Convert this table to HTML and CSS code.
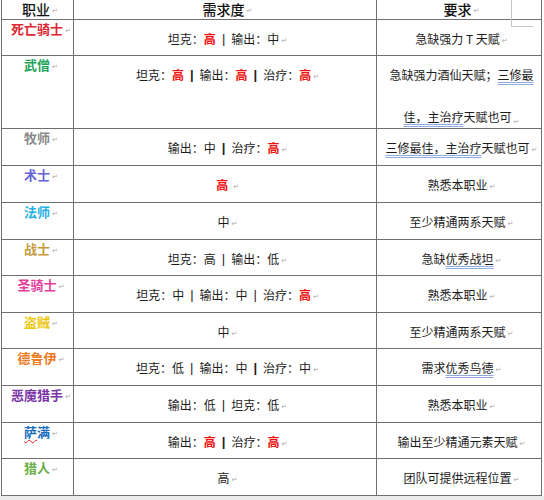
FILE: index.html
```html
<!DOCTYPE html>
<html lang="zh-CN">
<head>
<meta charset="utf-8">
<title>职业需求</title>
<link rel="stylesheet" href="styles.css">
</head>
<body>
<div class="page">
  <div class="sheet">
    <div class="c head">职业<span class="pm">↵</span></div>
    <div class="c head">需求度<span class="pm">↵</span></div>
    <div class="c head">要求<span class="pm">↵</span></div>

    <div class="c name dk">死亡骑士<span class="pm">↵</span></div>
    <div class="c">坦克：<b class="hi">高</b><span class="bar">|</span>输出：中<span class="pm">↵</span></div>
    <div class="c">急缺强力 T 天赋<span class="pm">↵</span></div>

    <div class="c name monk">武僧<span class="pm">↵</span></div>
    <div class="c tall">坦克：<b class="hi">高</b><span class="bar bold">|</span>输出：<b class="hi">高</b><span class="bar bold">|</span>治疗：<b class="hi">高</b><span class="pm">↵</span></div>
    <div class="c tall"><span class="two">急缺强力酒仙天赋；<u class="gram">三修最</u><br><u class="gram">佳，主治疗</u>天赋也可<span class="pm">↵</span></span></div>

    <div class="c name priest">牧师<span class="pm">↵</span></div>
    <div class="c">输出：中<span class="bar bold">|</span>治疗：<b class="hi">高</b><span class="pm">↵</span></div>
    <div class="c"><u class="gram">三修最佳，主治疗</u>天赋也可<span class="pm">↵</span></div>

    <div class="c name lock">术士<span class="pm">↵</span></div>
    <div class="c"><b class="hi">高</b>&nbsp;<span class="pm">↵</span></div>
    <div class="c">熟悉本职业<span class="pm">↵</span></div>

    <div class="c name mage">法师<span class="pm">↵</span></div>
    <div class="c">中<span class="pm">↵</span></div>
    <div class="c">至少精通两系天赋<span class="pm">↵</span></div>

    <div class="c name warrior">战士<span class="pm">↵</span></div>
    <div class="c">坦克：高<span class="bar">|</span>输出：低<span class="pm">↵</span></div>
    <div class="c">急缺<u class="gram">优秀战坦</u><span class="pm">↵</span></div>

    <div class="c name paladin">圣骑士<span class="pm">↵</span></div>
    <div class="c">坦克：中<span class="bar">|</span>输出：中<span class="bar">|</span>治疗：<b class="hi">高</b><span class="pm">↵</span></div>
    <div class="c">熟悉本职业<span class="pm">↵</span></div>

    <div class="c name rogue">盗贼<span class="pm">↵</span></div>
    <div class="c">中<span class="pm">↵</span></div>
    <div class="c">至少精通两系天赋<span class="pm">↵</span></div>

    <div class="c name druid">德鲁伊<span class="pm">↵</span></div>
    <div class="c">坦克：低<span class="bar">|</span>输出：中<span class="bar bold">|</span>治疗：中<span class="pm">↵</span></div>
    <div class="c">需求<u class="gram">优秀鸟德</u><span class="pm">↵</span></div>

    <div class="c name dh">恶魔猎手<span class="pm">↵</span></div>
    <div class="c">输出：低<span class="bar">|</span>坦克：低<span class="pm">↵</span></div>
    <div class="c">熟悉本职业<span class="pm">↵</span></div>

    <div class="c name shaman"><u class="spell">萨</u>满<span class="pm">↵</span></div>
    <div class="c">输出：<b class="hi">高</b><span class="bar bold">|</span>治疗：<b class="hi">高</b><span class="pm">↵</span></div>
    <div class="c">输出至少精通元素天赋<span class="pm">↵</span></div>

    <div class="c name hunter">猎人<span class="pm">↵</span></div>
    <div class="c">高<span class="pm">↵</span></div>
    <div class="c">团队可提供远程位置<span class="pm">↵</span></div>
  </div>
  <span class="cropmark"></span>
</div>
</body>
</html>
```

FILE: styles.css
```css
html, body {
  margin: 0;
  padding: 0;
}
body {
  background: #ececec;
  font-family: "Noto Sans CJK SC", "Noto Sans", sans-serif;
}
.page {
  position: relative;
  width: 544px;
  height: 496px;
  background: #ffffff;
}
.sheet {
  display: grid;
  grid-template-columns: 71px 302px 164px;
  grid-template-rows: 19px 35px 72px 36px 36px 36px 35px 36px 35px 36px 36px 35px 36px;
  gap: 1px;
  width: max-content;
  margin-left: 1px;
  padding: 0 1px 1px 1px;
  background: #6f6f6f;
}
.c {
  background: #ffffff;
  display: flex;
  justify-content: center;
  align-items: center;
  padding: 2px 0 0 5px;
  font-size: 12px;
  line-height: 16px;
  color: #1c1c1c;
  white-space: nowrap;
  overflow: visible;
}
.head {
  padding: 0 0 0 5px;
  font-size: 14px;
  line-height: 19px;
  font-weight: 500;
  color: #111;
}
.name {
  align-items: flex-start;
  padding: 1px 0 0 7px;
  font-size: 13px;
  font-weight: 700;
  line-height: 16px;
}
.tall {
  align-items: flex-start;
  padding-top: 0;
  line-height: 38px;
}
.two {
  display: block;
  text-align: center;
  line-height: 42px;
  margin-top: -2px;
}
.pm {
  font-family: "DejaVu Sans", sans-serif;
  font-size: 7px;
  font-weight: 400;
  color: #a8a8a8;
  margin-left: 2px;
  position: relative;
  top: 2px;
}
.hi {
  color: #f01010;
  font-weight: 700;
}
.bar {
  margin: 0 6px;
  font-family: "Liberation Sans", sans-serif;
  font-size: 13px;
  color: #222;
}
.bar.bold {
  font-weight: 700;
}
.gram {
  text-decoration: underline double #8faae0;
  text-decoration-thickness: 1px;
  text-underline-offset: 2px;
}
.spell {
  text-decoration: underline wavy #e02020;
  text-decoration-thickness: 1px;
  text-underline-offset: 2px;
}
.dk { color: #e02632; }
.monk { color: #1ea45a; }
.priest { color: #8a8a8a; }
.lock { color: #6464d8; }
.mage { color: #1fb0e6; }
.warrior { color: #c69a3a; }
.paladin { color: #e23f9c; }
.rogue { color: #ecc812; }
.druid { color: #f07a22; }
.dh { color: #7a34a8; }
.shaman { color: #1b6fc0; }
.hunter { color: #6cb048; }
.cropmark {
  position: absolute;
  left: 511px;
  top: 0;
  width: 21px;
  height: 26px;
  border-left: 1px solid #c4c4c4;
  border-bottom: 1px solid #c4c4c4;
}
```
